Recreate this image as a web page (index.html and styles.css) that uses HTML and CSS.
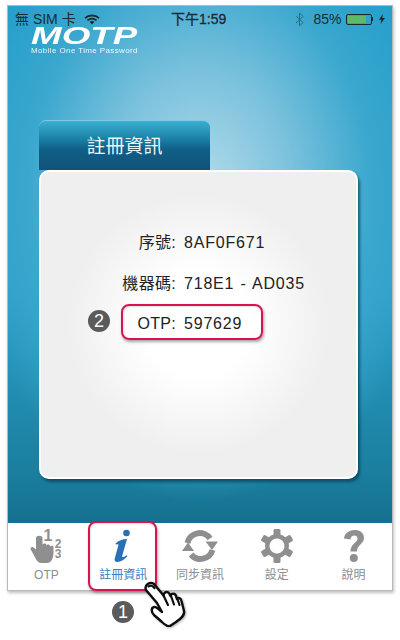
FILE: index.html
```html
<!DOCTYPE html>
<html lang="zh-Hant">
<head>
<meta charset="utf-8">
<title>MOTP</title>
<link rel="stylesheet" href="styles.css">
</head>
<body>
<div class="phone">
  <main class="screen">
    <div class="status">
      <div class="status-left">
        <span>無 SIM 卡</span>
        <svg class="wifi" viewBox="0 0 16 11"><path d="M1 4.200C5 .6 11 .6 15 4.200M3.400 6.400c2.800-2.200 6.400-2.200 9.200 0" fill="none" stroke="#1c2a30" stroke-width="1.800"/><path d="M5.600 7.800c1.500-1 3.300-1 4.800 0L8 10.600z" fill="#1c2a30"/></svg>
      </div>
      <div class="status-time">下午1:59</div>
      <div class="status-right">
        <svg class="bt" viewBox="0 0 9 15"><path d="M1 4l7 6.500L4.500 14V1L8 4.500 1 11" fill="none" stroke="#2a6c88" stroke-width="1"/></svg>
        <span class="pct">85%</span>
        <span class="battery"><span class="battery-fill"></span></span>
        <span class="battery-tip"></span>
        <svg class="bolt" viewBox="0 0 6 10"><path d="M3.800 0L0 5.800h2.300L1.600 10 6 3.900H3.400z" fill="#1c2a30"/></svg>
      </div>
    </div>
    <div class="logo">
      <div class="logo-mark">MOTP</div>
      <div class="logo-sub">Mobile One Time Password</div>
    </div>
    <section class="panel">
      <h1 class="tab">註冊資訊</h1>
      <div class="card">
        <dl class="info">
          <dt>序號:</dt><dd>8AF0F671</dd>
          <dt>機器碼:</dt><dd>718E1 - AD035</dd>
          <dt class="otp">OTP:</dt><dd class="otp">597629</dd>
        </dl>
      </div>
    </section>
  </main>
  <nav class="tabbar">
    <div class="item">
      <svg class="icon" viewBox="0 0 36 34"><path d="M3 21c-1.500-1.600.5-3.800 2.500-2.500L8 20.500V9c0-3 6.500-3 6.500 0v7c0-2 4-2 4 0v1c0-2 3.500-2 3.500 0v1c0-1.800 3.500-1.800 3.500 0v6c0 6-3 10-6 10h-6c-2.500 0-3.500-1.200-5-3z" fill="#8f8f8f"/><text x="20" y="12" class="num n1">1</text><text x="30" y="19" class="num">2</text><text x="30" y="29" class="num">3</text></svg>
      <span>OTP</span>
    </div>
    <div class="item active">
      <svg class="icon" viewBox="0 0 36 34"><circle cx="21.500" cy="4" r="3.300" fill="#2a70b8"/><path d="M10.500 14.500c3-2.800 7-4.500 11.500-4.500l-4.800 17c-.3 1.500.8 1.800 4.300-.8l.8 1.100C19 31 15.500 33 12.500 33c-2.500 0-3.300-1.500-2.700-3.700l3.500-12.800c.3-1.300-.6-1.400-2.200-.7z" fill="#2a70b8"/></svg>
      <span>註冊資訊</span>
    </div>
    <div class="item">
      <svg class="icon" viewBox="0 0 36 34"><path d="M5.500 14A12.500 12.500 0 0 1 28 9.500" fill="none" stroke="#8f8f8f" stroke-width="6"/><path d="M23.500 12.500h12.500l-6 8.500z" fill="#8f8f8f"/><path d="M30.500 21A12.500 12.500 0 0 1 9 25.500" fill="none" stroke="#8f8f8f" stroke-width="6"/><path d="M0 22h12l-6-8.500z" fill="#8f8f8f"/></svg>
      <span>同步資訊</span>
    </div>
    <div class="item">
      <svg class="icon" viewBox="0 0 36 34"><g fill="#8f8f8f"><path d="M18 5a12 12 0 1 0 .01 0zM18 9.500a7.500 7.500 0 1 1-.01 0z" fill-rule="evenodd"/><rect x="14.500" y="0" width="7" height="7" rx="1.500"/><rect x="14.500" y="27" width="7" height="7" rx="1.500"/><rect x="14.500" y="0" width="7" height="7" rx="1.500" transform="rotate(60 18 17)"/><rect x="14.500" y="27" width="7" height="7" rx="1.500" transform="rotate(60 18 17)"/><rect x="14.500" y="0" width="7" height="7" rx="1.500" transform="rotate(-60 18 17)"/><rect x="14.500" y="27" width="7" height="7" rx="1.500" transform="rotate(-60 18 17)"/></g></svg>
      <span>設定</span>
    </div>
    <div class="item">
      <svg class="icon" viewBox="0 0 36 34"><path d="M8 9.500C9-1.500 28-2 28 9c0 6-7 6.500-7 13.500h-6.500c0-8 7-8.500 7-13 0-4-7-4-7 1z" fill="#8f8f8f"/><circle cx="17.800" cy="29" r="4" fill="#8f8f8f"/></svg>
      <span>說明</span>
    </div>
  </nav>
  <div class="highlight hl-tab"></div>
  <div class="highlight hl-otp"></div>
  <span class="step step-1">1</span>
  <span class="step step-2">2</span>
  <svg class="hand" viewBox="0 0 46 46"><path d="M4 9C2 4 8 0 12 3l9.500 11.500c.5-4 4.500-4.500 6-1.500l1 2c1-3 4.500-3 5.500 0l1 3c1-2 4-1 4.500 2L42 30c1 5-4 8-8 11l-6 4c-3 1-6-2-8-4l-8-7c-3-3-3-7 0-8 2-1 6 4 8 5l-5-9z" fill="#fff" stroke="#0d0d0d" stroke-width="2.400" stroke-linejoin="round"/><path d="M6.500 5.500c2-2 4.500-.5 6 1.500M21.500 14.500L26 24M29 15l3 8.500M35.500 18l2 6" fill="none" stroke="#0d0d0d" stroke-width="2.200" stroke-linecap="round"/></svg>
</div>
</body>
</html>
```
FILE: styles.css
```css
* { box-sizing: border-box; }
html, body { margin: 0; height: 640px; overflow: hidden; background: #fff; }
body { font-family: "Liberation Sans", "Noto Sans CJK TC", sans-serif; padding: 5px 7px 0; }
.phone { position: relative; width: 386px; height: 586px; border: 1px solid #b9b9b9; box-shadow: 1px 2px 3px rgba(0,0,0,.25); background: #fff; }
.screen { height: 517px; display: flex; flex-direction: column; background: radial-gradient(ellipse 240px 310px at 50% 36%, #b5dcea 0%, #7cc2dd 38%, #3aa7ce 72%, rgba(38,160,203,0) 100%), linear-gradient(#249fcb 0%, #2a9fc9 55%, #1b7f9f 90%, #15708f 100%); }
.status { height: 21px; padding: 5px 7px 0 7px; display: flex; justify-content: space-between; align-items: center; font-size: 14px; line-height: 16px; color: #1c2a30; position: relative; }
.status-left { display: flex; align-items: center; gap: 8px; }
.wifi { width: 16px; height: 11px; }
.status-time { position: absolute; left: 163px; font-size: 14px; -webkit-text-stroke: .3px #1c2a30; }
.status-right { display: flex; align-items: center; }
.bt { width: 9px; height: 15px; margin-right: 9px; }
.pct { margin-right: 4px; }
.battery { width: 26px; height: 11px; border: 1px solid #1c2a30; border-radius: 2px; padding: 1px; display: flex; }
.battery-fill { width: 85%; background: #5fb96a; }
.battery-tip { width: 1.500px; height: 4px; background: #1c2a30; margin-right: 6px; }
.bolt { width: 6px; height: 10px; }
.logo { margin: 0 0 0 23px; color: #fff; height: 28px; }
.logo-mark { font: italic 700 23px/17px "Liberation Sans", sans-serif; height: 18px; padding-top: 1px; width: 66px; transform-origin: left top; transform: scaleX(1.600); white-space: nowrap; }
.logo-sub { font-size: 8px; line-height: 10px; padding-top: 1px; height: 10px; letter-spacing: .38px; white-space: nowrap; opacity: .9; }
.panel { margin: 65px 0 0 31px; width: 319px; display: flex; flex-direction: column; }
.tab { margin: 0; width: 171px; height: 50px; padding-top: 13px; border-radius: 7px 7px 0 0; border-top: 1px solid #7fcbe2; background: linear-gradient(#39b0d1 0%, #1a7ea5 38%, #0f5f87 58%, #12527a 100%); color: #eaf5f9; font-size: 19px; font-weight: 400; line-height: 26px; text-align: center; }
.card { height: 309px; padding-top: 62px; border: 2px solid #fff; border-radius: 10px; box-shadow: 2px 3px 3px rgba(5,60,85,.7); background: radial-gradient(ellipse 130px 130px at 50% 50%, #fff 40%, #efefef 100%); font-size: 16px; color: #222; }
.info { margin: 0; display: grid; grid-template-columns: 135px 1fr; column-gap: 8px; row-gap: 23px; line-height: 18px; letter-spacing: .8px; word-spacing: 1px; }
.info dt { text-align: right; white-space: nowrap; letter-spacing: .3px; }
.info dd { margin: 0; white-space: nowrap; }
.info .otp { margin-top: -1px; }
.tabbar { height: 67px; display: grid; grid-template-columns: repeat(5, 1fr); background: #fff; }
.item { display: flex; flex-direction: column; align-items: center; padding-top: 6px; font-size: 12px; line-height: 14px; color: #8d8d8d; }
.item span { margin-top: 5px; white-space: nowrap; }
.active { color: #3d82c4; }
.icon { width: 36px; height: 34px; overflow: visible; }
.num { font: 700 12px "Liberation Sans", sans-serif; fill: #8f8f8f; text-anchor: middle; }
.n1 { font-size: 16px; }
.highlight { position: absolute; border: 2px solid #d9134f; border-radius: 8px; box-shadow: 1px 2px 3px rgba(0,0,0,.35), inset 1px 1px 2px rgba(0,0,0,.12); }
.hl-tab { left: 80px; top: 515px; width: 69px; height: 70px; }
.hl-otp { left: 113px; top: 298px; width: 142px; height: 36px; }
.step { position: absolute; width: 22px; height: 22px; border-radius: 50%; background: #5b5b5b; color: #fff; font-size: 18px; line-height: 22px; text-align: center; }
.step-1 { left: 104px; top: 595px; }
.step-2 { left: 80px; top: 304px; }
.hand { position: absolute; left: 134px; top: 575px; width: 46px; height: 46px; filter: drop-shadow(1px 1px 1px rgba(0,0,0,.3)); }
```
